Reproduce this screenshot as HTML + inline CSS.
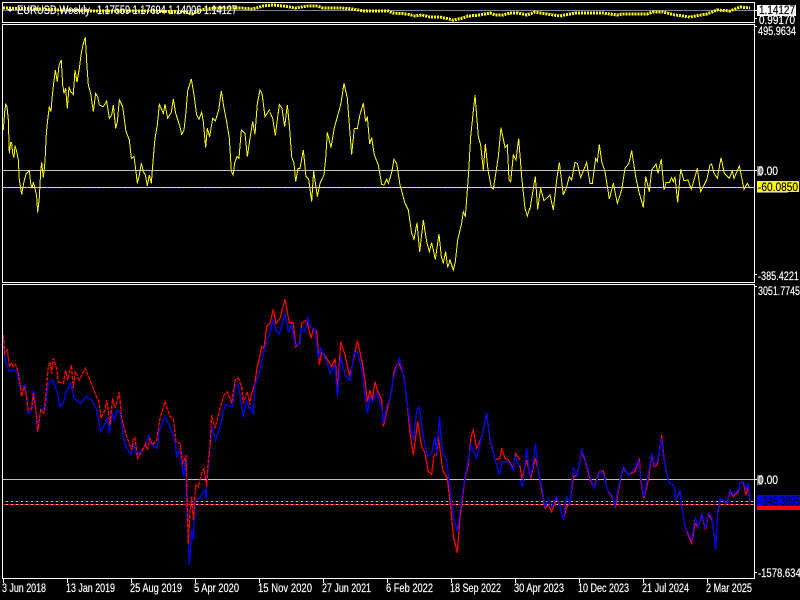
<!DOCTYPE html>
<html><head><meta charset="utf-8"><title>EURUSD Weekly</title>
<style>
html,body{margin:0;padding:0;background:#000;width:800px;height:600px;overflow:hidden}
svg{display:block}
text{font-family:"Liberation Sans",sans-serif;font-size:11.5px;fill:#fff;stroke:#fff;stroke-width:.18px}
text.k{fill:#000;stroke:#000}
polyline{fill:none;stroke-linejoin:miter}
</style></head><body>
<svg width="800" height="600" viewBox="0 0 800 600" xmlns="http://www.w3.org/2000/svg">
<defs>
<clipPath id="c1"><rect x="3" y="3" width="751" height="19"/></clipPath>
<clipPath id="c2"><rect x="3" y="25" width="751" height="257"/></clipPath>
<clipPath id="c3"><rect x="3" y="285" width="751" height="293"/></clipPath>
</defs>
<rect width="800" height="600" fill="#000"/>

<g clip-path="url(#c1)" shape-rendering="crispEdges">
<rect x="3" y="10" width="751" height="1" fill="#778899"/>
<polyline stroke="#ffff00" stroke-width="3" stroke-dasharray="2 1" points="3,8 40,9 60,10 100,11 150,11 185,12 192,14 200,10 215,8 240,8 253,9 263,6 273,5 283,6 295,8 307,6 318,6 323,8 340,8 353,9 363,11 380,11 388,11 393,13 407,14 415,16 422,15 430,17 440,17 453,20 463,18 468,16 480,15 490,13 495,15 503,15 510,13 518,13 527,15 535,12 547,14 560,16 575,13 587,13 603,13 617,15 622,14 647,14 653,12 663,12 675,15 690,17 707,14 717,10 730,11 740,7 750,8"/>
</g>

<g clip-path="url(#c2)">
<rect x="3" y="170" width="751" height="1" fill="#c0c0c0" shape-rendering="crispEdges"/>
<line x1="3" y1="187.5" x2="754" y2="187.5" stroke="#c0c0c0" shape-rendering="crispEdges"/>
<line x1="3" y1="187.5" x2="754" y2="187.5" stroke="#ffff00" stroke-dasharray="3 2" shape-rendering="crispEdges"/>
<g shape-rendering="crispEdges" stroke="#ffff00" stroke-width="3">
<polyline transform="matrix(.33333 0 0 .33333 0 25)" points="10,315 14,260 17,238 21,245 25,285 28,385 32,353 35,352 38,385 42,398 45,362 50,380 55,405 58,465 65,508 72,470 78,447 88,437 92,475 96,490 100,472 105,490 110,515 113,562 118,518 122,440 125,412 130,458 135,410 139,325 143,285 148,245 153,260 157,210 161,175 166,135 172,170 177,120 184,105 188,180 192,205 197,190 202,250 207,185 212,200 220,208 225,135 231,172 238,130 243,90 250,55 256,37 260,110 265,180 272,205 280,260 287,205 293,215 298,240 310,245 320,228 328,280 335,270 340,240 347,310 352,290 358,225 368,245 378,320 388,345 394,400 402,395 408,440 412,475 418,450 424,415 430,440 436,450 442,482 448,450 454,475 459,410 465,340 472,300 478,238 490,265 495,238 503,280 514,262 520,222 527,265 540,305 545,328 552,315 558,260 563,197 574,162 582,210 590,270 597,283 605,262 610,290 617,368 622,310 629,335 638,280 646,288 656,255 664,198 672,250 680,290 688,340 694,438 699,450 705,410 711,395 717,400 724,315 735,325 742,395 750,340 758,290 765,328 772,235 780,195 786,205 795,275 808,255 810,254"/>
<polyline transform="matrix(.33333 0 0 .33333 270 70)" points="0,127 8,145 16,197 22,150 28,103 36,115 44,170 52,105 58,165 65,260 72,280 77,335 84,295 90,295 100,240 108,320 116,328 125,395 131,303 142,380 150,340 162,315 167,265 172,187 183,233 193,173 205,130 213,100 222,40 232,85 240,190 245,253 253,175 262,175 270,133 280,100 287,155 292,140 299,222 305,203 313,255 325,285 335,343 342,345 350,328 355,340 365,308 372,268 380,280 390,345 405,400 415,420 425,490 432,508 441,458 449,546 460,450 470,515 478,545 485,518 496,568 507,492 514,560 520,580 527,545 533,592 540,570 550,600 556,575 563,510 575,460 580,425 586,440 595,320 602,200 615,75 625,200 632,225 640,300 646,222 654,300 664,352 670,357 685,260 693,173 705,232 712,225 717,330 722,335 730,255 738,270 746,205 755,320 765,415 772,438 780,412"/>
<polyline transform="matrix(.33333 0 0 .33333 530 130)" points="0,238 5,205 16,140 23,238 32,175 42,212 60,195 70,240 80,150 88,97 100,195 110,170 118,140 125,150 135,97 142,100 152,143 170,97 180,160 187,160 197,85 202,95 208,43 215,95 225,125 238,207 250,160 262,220 275,180 285,115 297,100 305,62 318,145 328,190 340,232 347,140 358,185 365,120 378,102 384,130 394,88 402,180 408,158 418,158 425,143 430,155 435,140 443,217 452,118 462,152 474,150 484,178 502,115 512,185 530,150 540,105 545,102 552,130 562,145 573,83 583,130 598,145 607,122 612,145 628,108 642,178 652,160 660,175"/>
</g>
</g>

<g clip-path="url(#c3)">
<rect x="3" y="479" width="751" height="1" fill="#c0c0c0" shape-rendering="crispEdges"/>
<line x1="3" y1="501.5" x2="754" y2="501.5" stroke="#c0c0c0" shape-rendering="crispEdges"/>
<line x1="3" y1="501.5" x2="754" y2="501.5" stroke="#0000ff" stroke-dasharray="3 2" shape-rendering="crispEdges"/>
<line x1="3" y1="504.5" x2="754" y2="504.5" stroke="#c0c0c0" shape-rendering="crispEdges"/>
<line x1="3" y1="504.5" x2="754" y2="504.5" stroke="#ff0000" stroke-dasharray="3 2" shape-rendering="crispEdges"/>
<g shape-rendering="crispEdges" stroke-width="3.8">
<g transform="matrix(.33333 0 0 .33333 0 330)">
<polyline stroke="#0000ff" points="10,45 18,100 28,125 38,118 50,125 60,170 75,165 85,250 95,240 100,180 108,240 112,300 122,240 135,235 145,160 158,150 172,185 180,230 190,220 197,190 212,160 222,205 242,220 258,200 275,210 290,240 302,305 315,280 322,265 328,310 335,245 342,270 352,240 362,250 372,335 392,375 400,340 410,375 435,350 447,315 455,345 472,355 478,300 495,260 510,290 525,330 530,380 540,360 550,440 557,380 559,500 568,705 575,600 580,630 585,510 598,505 615,480 618,505 622,440 630,350 635,290 647,330 660,290 675,225 698,230 705,160 715,165 730,260 740,210 747,235 750,240"/>
<polyline stroke="#ff0000" stroke-dasharray="12 3" points="10,15 14,70 22,60 28,110 35,98 40,110 47,103 55,130 62,175 65,200 72,170 78,190 85,240 95,235 100,190 107,235 113,305 122,240 132,250 138,190 145,110 150,95 155,130 160,85 170,115 175,155 190,160 197,122 203,150 214,105 220,175 226,125 238,150 256,115 270,150 285,190 298,220 303,265 315,240 320,210 330,285 338,205 345,235 358,187 365,265 380,320 395,360 400,325 405,322 413,385 425,365 437,340 442,360 450,325 458,345 470,330 480,265 495,215 510,260 520,265 528,335 540,340 548,400 558,375 560,450 565,640 570,545 575,500 580,570 587,465 595,470 605,430 612,415 620,470 625,390 630,350 635,255 645,295 660,235 672,195 682,185 695,220 705,150 715,145 725,170 730,220 742,185 750,225"/>
</g>
<g transform="matrix(.33333 0 0 .33333 250 290)">
<polyline stroke="#ff0000" points="0,335 5,310 15,280 20,240 30,195 35,170 42,175 50,110 60,100 70,58 78,100 90,85 105,28 118,98 130,98 137,170 148,160 155,100 170,90 183,145 190,115 200,125 208,225 215,185 230,205 245,230 255,205 263,300 272,155 285,195 298,255 305,235 322,152 335,210 345,270 352,335 360,300 367,330 375,275 385,310 395,330 400,410 415,345 425,300 432,245 445,215 462,260 472,345 480,430 490,495 503,395 515,470 525,490 535,545 545,553 552,495 560,495 565,440 578,540 592,565 603,660 610,740 622,788 630,680 645,565 655,525 663,440 670,420 680,475 695,440 710,370 720,450 735,510 750,505 755,475 765,505 775,510 790,535 797,490 810,510"/>
<polyline stroke="#0000ff" points="0,350 10,370 15,285 25,260 35,215 50,150 60,130 68,90 78,120 88,132 105,70 115,125 125,105 135,165 150,160 153,115 165,125 172,80 180,110 195,118 205,205 212,175 230,215 240,250 255,225 262,320 272,200 285,255 300,272 312,190 322,185 338,250 345,320 352,370 360,320 368,335 380,310 395,350 400,400 410,350 420,325 430,265 448,205 462,265 472,340 480,400 490,450 500,360 508,352 520,440 533,500 545,490 555,440 560,490 568,380 578,490 590,510 600,600 610,680 622,725 630,660 645,560 655,510 663,465 680,505 695,440 710,368 720,445 733,500 748,555 757,515 775,515 790,540 795,500 810,535"/>
</g>
<g transform="matrix(.33333 0 0 .33333 520 400)">
<polyline stroke="#ff0000" points="0,195 5,235 20,180 32,235 46,175 55,210 65,270 75,325 85,315 95,335 110,295 120,320 130,360 140,320 150,310 160,230 172,225 185,155 195,180 210,240 222,262 238,215 250,212 262,270 275,290 287,320 300,245 310,205 325,225 345,215 358,175 362,240 372,295 385,240 395,165 403,200 412,195 425,105 432,175 445,245 462,260 468,300 480,275 485,320 495,380 515,430 525,370 535,385 545,345 557,390 565,345 575,355 582,400 587,440 593,345 600,295 620,312 630,275 640,290 655,275 660,250 670,248 678,285 685,260 690,305"/>
<polyline stroke="#0000ff" points="0,240 8,260 15,190 20,145 30,230 38,200 46,130 55,215 65,260 75,320 85,300 95,320 110,290 120,320 130,360 140,290 150,310 160,205 172,225 185,150 195,175 210,230 222,265 240,215 250,220 262,270 275,285 285,315 300,240 310,200 325,225 345,205 355,180 362,230 372,290 382,240 395,160 403,195 412,185 425,115 430,170 445,245 462,260 468,300 480,270 485,320 495,380 515,420 525,350 535,385 545,340 557,385 565,340 575,350 582,400 587,450 593,340 600,295 620,310 630,270 640,285 655,270 660,250 670,245 678,270 685,250 690,300"/>
</g>
</g>
</g>

<g fill="#fff" shape-rendering="crispEdges">
<rect x="2" y="2" width="753" height="1"/><rect x="2" y="22" width="753" height="1"/>
<rect x="2" y="24" width="753" height="1"/><rect x="2" y="282" width="753" height="1"/>
<rect x="2" y="284" width="753" height="1"/><rect x="2" y="578" width="753" height="1"/>
<rect x="2" y="2" width="1" height="21"/><rect x="2" y="24" width="1" height="259"/><rect x="2" y="284" width="1" height="295"/>
<rect x="754" y="2" width="1" height="21"/><rect x="754" y="24" width="1" height="259"/><rect x="754" y="284" width="1" height="295"/>
<rect x="755" y="10" width="2" height="1"/><rect x="755" y="18" width="2" height="1"/>
<rect x="755" y="26" width="2" height="1"/><rect x="755" y="170" width="2" height="1"/><rect x="755" y="274" width="2" height="1"/>
<rect x="755" y="286" width="2" height="1"/><rect x="755" y="479" width="2" height="1"/><rect x="755" y="572" width="2" height="1"/>
<rect x="3" y="579" width="1" height="4"/><rect x="67" y="579" width="1" height="4"/><rect x="131" y="579" width="1" height="4"/><rect x="195" y="579" width="1" height="4"/>
<rect x="259" y="579" width="1" height="4"/><rect x="323" y="579" width="1" height="4"/><rect x="387" y="579" width="1" height="4"/><rect x="451" y="579" width="1" height="4"/>
<rect x="515" y="579" width="1" height="4"/><rect x="579" y="579" width="1" height="4"/><rect x="643" y="579" width="1" height="4"/><rect x="707" y="579" width="1" height="4"/>
</g>

<path d="M7 9h6l-3 3z" fill="#fff"/>
<text x="17" y="14" textLength="73" lengthAdjust="spacingAndGlyphs">EURUSD,Weekly</text>
<text x="97" y="14" textLength="140" lengthAdjust="spacingAndGlyphs">1.17559 1.17694 1.14006 1.14127</text>

<rect x="757" y="5" width="39" height="11" fill="#fff"/>
<text class="k" x="759" y="14" textLength="36" lengthAdjust="spacingAndGlyphs">1.14127</text>
<text x="759" y="24" textLength="36" lengthAdjust="spacingAndGlyphs">0.99170</text>
<text x="758" y="35" textLength="38" lengthAdjust="spacingAndGlyphs">495.9634</text>

<rect x="757" y="166" width="5" height="10" fill="#808080"/>
<text x="758" y="175" textLength="20" lengthAdjust="spacingAndGlyphs">0.00</text>
<rect x="757" y="192" width="31" height="1" fill="#808080"/>
<rect x="757" y="181" width="42" height="11" fill="#ffff00"/>
<text class="k" x="758" y="191" textLength="40" lengthAdjust="spacingAndGlyphs">-60.0850</text>
<text x="758" y="280" textLength="41" lengthAdjust="spacingAndGlyphs">-385.4221</text>

<text x="758" y="295" textLength="42" lengthAdjust="spacingAndGlyphs">3051.7745</text>
<rect x="757" y="475" width="5" height="10" fill="#808080"/>
<text x="758" y="484" textLength="20" lengthAdjust="spacingAndGlyphs">0.00</text>
<rect x="757" y="495" width="43" height="11" fill="#0000ff"/>
<rect x="757" y="506" width="43" height="4" fill="#ff0000"/>
<text class="k" x="760" y="505" textLength="40" lengthAdjust="spacingAndGlyphs">-346.3895</text>
<text x="758" y="577" textLength="48" lengthAdjust="spacingAndGlyphs">-1578.6345</text>

<text x="2" y="592" textLength="44" lengthAdjust="spacingAndGlyphs">3 Jun 2018</text>
<text x="66" y="592" textLength="49" lengthAdjust="spacingAndGlyphs">13 Jan 2019</text>
<text x="130" y="592" textLength="52" lengthAdjust="spacingAndGlyphs">25 Aug 2019</text>
<text x="194" y="592" textLength="45" lengthAdjust="spacingAndGlyphs">5 Apr 2020</text>
<text x="258" y="592" textLength="54" lengthAdjust="spacingAndGlyphs">15 Nov 2020</text>
<text x="322" y="592" textLength="49" lengthAdjust="spacingAndGlyphs">27 Jun 2021</text>
<text x="386" y="592" textLength="47" lengthAdjust="spacingAndGlyphs">6 Feb 2022</text>
<text x="450" y="592" textLength="51" lengthAdjust="spacingAndGlyphs">18 Sep 2022</text>
<text x="514" y="592" textLength="50" lengthAdjust="spacingAndGlyphs">30 Apr 2023</text>
<text x="578" y="592" textLength="51" lengthAdjust="spacingAndGlyphs">10 Dec 2023</text>
<text x="642" y="592" textLength="47" lengthAdjust="spacingAndGlyphs">21 Jul 2024</text>
<text x="706" y="592" textLength="46" lengthAdjust="spacingAndGlyphs">2 Mar 2025</text>
</svg>
</body></html>
